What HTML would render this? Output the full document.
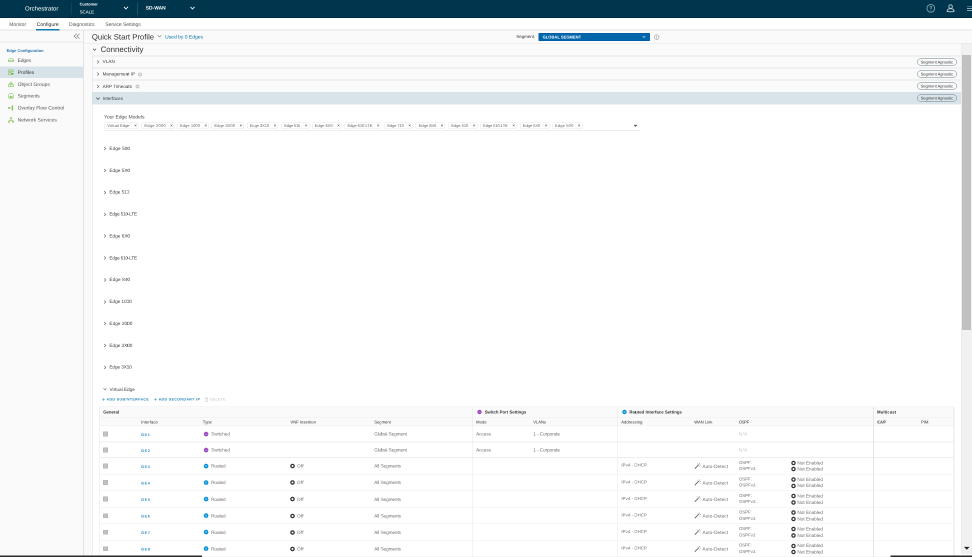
<!DOCTYPE html>
<html lang="en"><head><meta charset="utf-8"><title>Orchestrator</title>
<style>
html,body{margin:0;padding:0;background:#fff;}
body{width:972px;height:557px;overflow:hidden;font-family:"Liberation Sans",sans-serif;}
#clip{position:absolute;left:0;top:0;width:972px;height:557px;overflow:hidden;background:#fff;}
#root{position:absolute;left:0;top:0;width:1944px;height:1114px;transform:scale(0.5);transform-origin:0 0;will-change:transform;background:#fff;overflow:hidden;text-rendering:geometricPrecision;}
#root div,#root svg{position:absolute;}
.t{position:absolute;white-space:nowrap;font-family:"Liberation Sans",sans-serif;}
</style></head><body>
<div id="clip"><div id="root">
<div style="left:0.00px;top:0.00px;width:1944.00px;height:35.40px;background:#00364d;"></div>
<div style="left:0.00px;top:33.60px;width:1944.00px;height:2.00px;background:#002b40;"></div>
<div style="left:141.60px;top:5.20px;width:1.40px;height:24.20px;background:rgba(255,255,255,0.13);"></div>
<div style="left:274.20px;top:5.20px;width:1.40px;height:24.20px;background:rgba(255,255,255,0.13);"></div>
<svg style="left:246.40px;top:10.60px" width="12.00" height="10.00" viewBox="0 0 6 5"><path d="M1.0 1.4 L3 3.5 L5 1.4" fill="none" stroke="#fff" stroke-width="0.85"/></svg>
<svg style="left:378.60px;top:10.60px" width="12.00" height="10.00" viewBox="0 0 6 5"><path d="M1.0 1.4 L3 3.5 L5 1.4" fill="none" stroke="#fff" stroke-width="0.85"/></svg>
<svg style="left:1852.00px;top:7.00px" width="20.00" height="20.00" viewBox="0 0 10 10"><circle cx="4.8" cy="4.8" r="3.85" fill="none" stroke="#8ba5b3" stroke-width="0.85"/><path d="M3.8 4 Q3.9 2.9 4.9 2.9 Q5.9 3 5.8 3.9 Q5.7 4.5 4.85 4.9 L4.85 5.6" fill="none" stroke="#8ba5b3" stroke-width="0.7"/><circle cx="4.85" cy="6.6" r="0.45" fill="#8ba5b3"/></svg>
<svg style="left:1892.00px;top:6.00px" width="20.00" height="20.00" viewBox="0 0 10 10"><circle cx="4.6" cy="3.6" r="1.75" fill="none" stroke="#c5d2d9" stroke-width="0.85"/><path d="M1.1 8.3 Q1.3 5.7 4.6 5.7 Q7.9 5.7 8.1 8.3 Q4.6 9.3 1.1 8.3 Z" fill="none" stroke="#c5d2d9" stroke-width="0.85"/></svg>
<div style="left:1934.00px;top:11.60px;width:10.00px;height:1.80px;background:#8ba5b3;"></div>
<div style="left:1934.00px;top:15.80px;width:10.00px;height:1.80px;background:#8ba5b3;"></div>
<div style="left:1934.00px;top:20.40px;width:10.00px;height:1.80px;background:#8ba5b3;"></div>
<div style="left:0.00px;top:35.60px;width:1944.00px;height:24.40px;background:#fff;"></div>
<div style="left:0.00px;top:59.20px;width:1944.00px;height:1.60px;background:#e2e2e2;"></div>
<div style="left:71.60px;top:58.40px;width:47.80px;height:2.60px;background:#0f7bb0;"></div>
<div style="left:0.00px;top:60.80px;width:166.40px;height:1053.20px;background:#fafafa;"></div>
<div style="left:166.40px;top:60.80px;width:1.60px;height:1053.20px;background:#e3e3e3;"></div>
<div style="left:0.00px;top:83.40px;width:166.40px;height:1.40px;background:#e6e6e6;"></div>
<div style="left:0.00px;top:132.60px;width:166.80px;height:23.20px;background:#d8e3e9;"></div>
<svg style="left:143.00px;top:65.00px" width="20.00" height="16.00" viewBox="0 0 10 8"><path d="M5.2 1.2 L2.6 3.7 L5.2 6.2 M8 1.2 L5.4 3.7 L8 6.2" fill="none" stroke="#666" stroke-width="0.6"/></svg>
<svg style="left:14.60px;top:113.80px" width="14.00" height="14.00" viewBox="0 0 7 7"><path d="M0.9 4.6 L0.9 3.6 Q1.2 1.3 3.5 1.3 Q5.8 1.3 6.1 3.6 L6.1 4.6 Z M0.9 3.7 L6.1 3.7" fill="none" stroke="#6fb83a" stroke-width="0.5"/></svg>
<svg style="left:14.60px;top:138.20px" width="14.00" height="14.00" viewBox="0 0 7 7"><rect x="1.2" y="0.9" width="4.4" height="1.7" fill="none" stroke="#6fb83a" stroke-width="0.5"/><rect x="1.2" y="3.5" width="2.4" height="2.2" fill="none" stroke="#6fb83a" stroke-width="0.5"/><circle cx="5" cy="4.8" r="1.1" fill="#6fb83a"/></svg>
<svg style="left:14.60px;top:162.00px" width="14.00" height="14.00" viewBox="0 0 7 7"><path d="M3.5 0.8 L5 2.7 L2 2.7 Z" fill="none" stroke="#6fb83a" stroke-width="0.5"/><rect x="1" y="3.5" width="5" height="2.2" fill="none" stroke="#6fb83a" stroke-width="0.5"/><path d="M3.5 3.5 L3.5 5.7" stroke="#6fb83a" stroke-width="0.45"/></svg>
<svg style="left:14.60px;top:185.20px" width="14.00" height="14.00" viewBox="0 0 7 7"><path d="M1.3 5.7 L1.3 2.3 Q1.3 1.1 2.6 1.1 L4.4 1.1 Q5.7 1.1 5.7 2.3 L5.7 5.7 Z" fill="none" stroke="#6fb83a" stroke-width="0.5"/><path d="M2.1 5.2 L2.1 3.9 L3.2 3 L4.9 3.9 L4.9 5.2 Z" fill="#6fb83a" opacity="0.8"/></svg>
<svg style="left:14.60px;top:208.60px" width="14.00" height="14.00" viewBox="0 0 7 7"><path d="M1 3.4 L3.2 3.4 M3.2 3.4 L4.8 1.4 M3.2 3.4 L4.8 5.4" fill="none" stroke="#6fb83a" stroke-width="0.5"/><rect x="4.7" y="0.8" width="0.9" height="5.2" fill="#6fb83a"/><circle cx="1.5" cy="3.4" r="0.9" fill="#6fb83a"/></svg>
<svg style="left:14.60px;top:233.20px" width="14.00" height="14.00" viewBox="0 0 7 7"><circle cx="3.5" cy="1.7" r="1" fill="none" stroke="#6fb83a" stroke-width="0.5"/><path d="M3.5 2.8 L3.5 4 M1.5 5 L1.5 4 L5.5 4 L5.5 5" fill="none" stroke="#6fb83a" stroke-width="0.5"/><rect x="0.7" y="4.8" width="1.6" height="1.2" fill="#6fb83a"/><rect x="4.7" y="4.8" width="1.6" height="1.2" fill="#6fb83a"/></svg>
<div style="left:168.00px;top:60.80px;width:1776.00px;height:26.40px;background:#fafafa;"></div>
<div style="left:168.00px;top:87.20px;width:1754.40px;height:1026.80px;background:#fafafa;"></div>
<div style="left:168.00px;top:85.80px;width:1776.00px;height:1.40px;background:#e4e4e4;"></div>
<div style="left:1077.20px;top:65.80px;width:222.40px;height:16.20px;background:#0066ac;border:1.00px solid #0054a0;box-sizing:border-box;border-radius:1.20px;"></div>
<svg style="left:1282.00px;top:69.00px" width="12.00" height="10.00" viewBox="0 0 6 5"><path d="M1.6 1.6 L2.9 3 L4.2 1.6" fill="none" stroke="#cfe0f0" stroke-width="0.6"/></svg>
<svg style="left:1307.00px;top:68.00px" width="14.00" height="14.00" viewBox="0 0 7 7"><circle cx="3.2" cy="3.2" r="2.3" fill="none" stroke="#777" stroke-width="0.5"/><path d="M3.2 2.9 L3.2 4.4" stroke="#777" stroke-width="0.5"/><circle cx="3.2" cy="2.1" r="0.3" fill="#777"/></svg>
<svg style="left:313.00px;top:67.40px" width="12.00" height="10.00" viewBox="0 0 6 5"><path d="M1.1 1.7 L3 3.5 L4.9 1.7" fill="none" stroke="#777" stroke-width="0.55"/></svg>
<svg style="left:183.00px;top:93.60px" width="12.00" height="10.00" viewBox="0 0 6 5"><path d="M1.4 1.7 L3 3.4 L4.6 1.7" fill="none" stroke="#555" stroke-width="0.7"/></svg>
<div style="left:184.00px;top:111.20px;width:1738.40px;height:1002.80px;background:#fff;"></div>
<div style="left:184.00px;top:111.20px;width:1.20px;height:1002.80px;background:#dcdcdc;"></div>
<div style="left:185.20px;top:112.00px;width:1737.20px;height:24.00px;background:#fafafa;"></div>
<div style="left:185.20px;top:136.00px;width:1737.20px;height:24.00px;background:#fafafa;"></div>
<div style="left:185.20px;top:160.00px;width:1737.20px;height:24.40px;background:#fafafa;"></div>
<div style="left:184.00px;top:111.20px;width:1738.40px;height:1.40px;background:#e6e6e6;"></div>
<div style="left:184.00px;top:135.20px;width:1738.40px;height:1.40px;background:#e6e6e6;"></div>
<div style="left:184.00px;top:159.40px;width:1738.40px;height:1.40px;background:#e6e6e6;"></div>
<div style="left:184.00px;top:183.80px;width:1738.40px;height:1.40px;background:#e6e6e6;"></div>
<div style="left:185.20px;top:184.40px;width:1737.20px;height:24.60px;background:#d9e4ea;"></div>
<svg style="left:191.20px;top:119.20px" width="10.00" height="10.00" viewBox="0 0 5 5"><path d="M1.7 1 L3.3 2.5 L1.7 4" fill="none" stroke="#5a5a5a" stroke-width="0.55"/></svg>
<svg style="left:191.20px;top:143.40px" width="10.00" height="10.00" viewBox="0 0 5 5"><path d="M1.7 1 L3.3 2.5 L1.7 4" fill="none" stroke="#5a5a5a" stroke-width="0.55"/></svg>
<svg style="left:191.20px;top:167.80px" width="10.00" height="10.00" viewBox="0 0 5 5"><path d="M1.7 1 L3.3 2.5 L1.7 4" fill="none" stroke="#5a5a5a" stroke-width="0.55"/></svg>
<svg style="left:191.20px;top:192.00px" width="10.00" height="10.00" viewBox="0 0 5 5"><path d="M0.8 1.6 L2.5 3.4 L4.2 1.6" fill="none" stroke="#444" stroke-width="0.7"/></svg>
<svg style="left:275.20px;top:143.60px" width="10.00" height="10.00" viewBox="0 0 5 5"><circle cx="2.5" cy="2.5" r="1.6" fill="none" stroke="#888" stroke-width="0.45"/><path d="M2.5 2.3 L2.5 3.3" stroke="#888" stroke-width="0.45"/><circle cx="2.5" cy="1.7" r="0.25" fill="#888"/></svg>
<svg style="left:269.60px;top:167.80px" width="10.00" height="10.00" viewBox="0 0 5 5"><circle cx="2.5" cy="2.5" r="1.6" fill="none" stroke="#888" stroke-width="0.45"/><path d="M2.5 2.3 L2.5 3.3" stroke="#888" stroke-width="0.45"/><circle cx="2.5" cy="1.7" r="0.25" fill="#888"/></svg>
<div style="left:1834.20px;top:117.00px;width:80.00px;height:14.00px;background:#fafafa;border:1.10px solid #6a7f8c;box-sizing:border-box;border-radius:7.00px;"></div>
<div style="left:1834.20px;top:141.00px;width:80.00px;height:14.00px;background:#fafafa;border:1.10px solid #6a7f8c;box-sizing:border-box;border-radius:7.00px;"></div>
<div style="left:1834.20px;top:165.00px;width:80.00px;height:14.00px;background:#fafafa;border:1.10px solid #6a7f8c;box-sizing:border-box;border-radius:7.00px;"></div>
<div style="left:1834.20px;top:189.40px;width:80.00px;height:14.00px;background:#d9e4ea;border:1.10px solid #6a7f8c;box-sizing:border-box;border-radius:7.00px;"></div>
<div style="left:1922.40px;top:87.20px;width:21.60px;height:1020.40px;background:#f1f1f1;"></div>
<div style="left:1922.00px;top:87.20px;width:1.00px;height:1020.40px;background:#e6e6e6;"></div>
<div style="left:1923.80px;top:110.40px;width:18.20px;height:550.00px;background:#c1c1c1;"></div>
<svg style="left:1926.00px;top:1091.00px" width="16.00" height="12.00" viewBox="0 0 8 6"><path d="M1 1.4 L6.6 1.4 L3.8 4.2 Z" fill="#222"/></svg>
<div style="left:1922.40px;top:1107.60px;width:21.60px;height:6.40px;background:#fff;"></div>
<div style="left:208.40px;top:245.20px;width:69.00px;height:13.00px;background:#fff;border:1.00px solid #e4e4e4;box-sizing:border-box;border-radius:2.80px;"></div>
<div style="left:282.80px;top:245.20px;width:66.60px;height:13.00px;background:#fff;border:1.00px solid #e4e4e4;box-sizing:border-box;border-radius:2.80px;"></div>
<div style="left:354.00px;top:245.20px;width:64.00px;height:13.00px;background:#fff;border:1.00px solid #e4e4e4;box-sizing:border-box;border-radius:2.80px;"></div>
<div style="left:422.80px;top:245.20px;width:65.20px;height:13.00px;background:#fff;border:1.00px solid #e4e4e4;box-sizing:border-box;border-radius:2.80px;"></div>
<div style="left:493.60px;top:245.20px;width:62.80px;height:13.00px;background:#fff;border:1.00px solid #e4e4e4;box-sizing:border-box;border-radius:2.80px;"></div>
<div style="left:562.60px;top:245.20px;width:56.00px;height:13.00px;background:#fff;border:1.00px solid #e4e4e4;box-sizing:border-box;border-radius:2.80px;"></div>
<div style="left:623.60px;top:245.20px;width:59.80px;height:13.00px;background:#fff;border:1.00px solid #e4e4e4;box-sizing:border-box;border-radius:2.80px;"></div>
<div style="left:689.00px;top:245.20px;width:73.80px;height:13.00px;background:#fff;border:1.00px solid #e4e4e4;box-sizing:border-box;border-radius:2.80px;"></div>
<div style="left:768.80px;top:245.20px;width:57.00px;height:13.00px;background:#fff;border:1.00px solid #e4e4e4;box-sizing:border-box;border-radius:2.80px;"></div>
<div style="left:831.40px;top:245.20px;width:59.00px;height:13.00px;background:#fff;border:1.00px solid #e4e4e4;box-sizing:border-box;border-radius:2.80px;"></div>
<div style="left:896.40px;top:245.20px;width:58.20px;height:13.00px;background:#fff;border:1.00px solid #e4e4e4;box-sizing:border-box;border-radius:2.80px;"></div>
<div style="left:960.20px;top:245.20px;width:73.40px;height:13.00px;background:#fff;border:1.00px solid #e4e4e4;box-sizing:border-box;border-radius:2.80px;"></div>
<div style="left:1039.60px;top:245.20px;width:59.00px;height:13.00px;background:#fff;border:1.00px solid #e4e4e4;box-sizing:border-box;border-radius:2.80px;"></div>
<div style="left:1104.00px;top:245.20px;width:60.60px;height:13.00px;background:#fff;border:1.00px solid #e4e4e4;box-sizing:border-box;border-radius:2.80px;"></div>
<div style="left:208.00px;top:259.80px;width:1072.00px;height:1.20px;background:#dadada;"></div>
<svg style="left:1265.00px;top:247.00px" width="12.00" height="10.00" viewBox="0 0 6 5"><path d="M1.2 1.4 L4.8 1.4 L3 3.4 Z" fill="#444"/></svg>
<svg style="left:204.80px;top:292.40px" width="10.00" height="10.00" viewBox="0 0 5 5"><path d="M1.7 1 L3.3 2.5 L1.7 4" fill="none" stroke="#5a5a5a" stroke-width="0.55"/></svg>
<svg style="left:204.80px;top:336.14px" width="10.00" height="10.00" viewBox="0 0 5 5"><path d="M1.7 1 L3.3 2.5 L1.7 4" fill="none" stroke="#5a5a5a" stroke-width="0.55"/></svg>
<svg style="left:204.80px;top:379.88px" width="10.00" height="10.00" viewBox="0 0 5 5"><path d="M1.7 1 L3.3 2.5 L1.7 4" fill="none" stroke="#5a5a5a" stroke-width="0.55"/></svg>
<svg style="left:204.80px;top:423.62px" width="10.00" height="10.00" viewBox="0 0 5 5"><path d="M1.7 1 L3.3 2.5 L1.7 4" fill="none" stroke="#5a5a5a" stroke-width="0.55"/></svg>
<svg style="left:204.80px;top:467.36px" width="10.00" height="10.00" viewBox="0 0 5 5"><path d="M1.7 1 L3.3 2.5 L1.7 4" fill="none" stroke="#5a5a5a" stroke-width="0.55"/></svg>
<svg style="left:204.80px;top:511.10px" width="10.00" height="10.00" viewBox="0 0 5 5"><path d="M1.7 1 L3.3 2.5 L1.7 4" fill="none" stroke="#5a5a5a" stroke-width="0.55"/></svg>
<svg style="left:204.80px;top:554.84px" width="10.00" height="10.00" viewBox="0 0 5 5"><path d="M1.7 1 L3.3 2.5 L1.7 4" fill="none" stroke="#5a5a5a" stroke-width="0.55"/></svg>
<svg style="left:204.80px;top:598.58px" width="10.00" height="10.00" viewBox="0 0 5 5"><path d="M1.7 1 L3.3 2.5 L1.7 4" fill="none" stroke="#5a5a5a" stroke-width="0.55"/></svg>
<svg style="left:204.80px;top:642.32px" width="10.00" height="10.00" viewBox="0 0 5 5"><path d="M1.7 1 L3.3 2.5 L1.7 4" fill="none" stroke="#5a5a5a" stroke-width="0.55"/></svg>
<svg style="left:204.80px;top:686.06px" width="10.00" height="10.00" viewBox="0 0 5 5"><path d="M1.7 1 L3.3 2.5 L1.7 4" fill="none" stroke="#5a5a5a" stroke-width="0.55"/></svg>
<svg style="left:204.80px;top:729.80px" width="10.00" height="10.00" viewBox="0 0 5 5"><path d="M1.7 1 L3.3 2.5 L1.7 4" fill="none" stroke="#5a5a5a" stroke-width="0.55"/></svg>
<svg style="left:204.80px;top:772.80px" width="10.00" height="10.00" viewBox="0 0 5 5"><path d="M1 1.8 L2.5 3.3 L4 1.8" fill="none" stroke="#5a5a5a" stroke-width="0.55"/></svg>
<svg style="left:202.80px;top:794.60px" width="8.00" height="8.00" viewBox="0 0 4 4"><path d="M0.4 2 L3.6 2 M2 0.4 L2 3.6" stroke="#3a8fc0" stroke-width="0.45"/></svg>
<svg style="left:306.80px;top:794.60px" width="8.00" height="8.00" viewBox="0 0 4 4"><path d="M0.4 2 L3.6 2 M2 0.4 L2 3.6" stroke="#3a8fc0" stroke-width="0.45"/></svg>
<svg style="left:407.60px;top:793.20px" width="10.00" height="12.00" viewBox="0 0 5 6"><path d="M1 1.6 L4 1.6 M1.4 1.6 L1.4 5 L3.6 5 L3.6 1.6 M2 0.9 L3 0.9" fill="none" stroke="#c4c4c4" stroke-width="0.5"/></svg>
<div style="left:198.60px;top:813.80px;width:1709.40px;height:38.00px;background:#fafafa;"></div>
<div style="left:198.60px;top:813.20px;width:1709.40px;height:1.30px;background:#eeeeee;"></div>
<div style="left:198.60px;top:834.20px;width:1709.40px;height:1.30px;background:#eeeeee;"></div>
<div style="left:198.60px;top:851.20px;width:1709.40px;height:1.30px;background:#eeeeee;"></div>
<div style="left:198.60px;top:883.40px;width:1709.40px;height:1.30px;background:#eeeeee;"></div>
<div style="left:198.60px;top:914.40px;width:1709.40px;height:1.30px;background:#eeeeee;"></div>
<div style="left:198.60px;top:947.70px;width:1709.40px;height:1.30px;background:#eeeeee;"></div>
<div style="left:198.60px;top:980.80px;width:1709.40px;height:1.30px;background:#eeeeee;"></div>
<div style="left:198.60px;top:1013.90px;width:1709.40px;height:1.30px;background:#eeeeee;"></div>
<div style="left:198.60px;top:1047.00px;width:1709.40px;height:1.30px;background:#eeeeee;"></div>
<div style="left:198.60px;top:1080.10px;width:1709.40px;height:1.30px;background:#eeeeee;"></div>
<div style="left:198.60px;top:1113.20px;width:1709.40px;height:1.30px;background:#eeeeee;"></div>
<div style="left:198.00px;top:813.80px;width:1.30px;height:300.20px;background:#e6e6e6;"></div>
<div style="left:944.00px;top:813.80px;width:1.30px;height:300.20px;background:#e6e6e6;"></div>
<div style="left:1233.60px;top:813.80px;width:1.30px;height:300.20px;background:#e6e6e6;"></div>
<div style="left:1746.40px;top:813.80px;width:1.30px;height:300.20px;background:#e6e6e6;"></div>
<div style="left:1907.40px;top:813.80px;width:1.30px;height:300.20px;background:#e6e6e6;"></div>
<svg style="left:953.80px;top:819.00px" width="10.00" height="10.00" viewBox="0 0 5 5"><circle cx="2.5" cy="2.5" r="2.2" fill="#9a45c0"/><path d="M1.3 2.5 L3.7 2.5" stroke="#d9b5ea" stroke-width="0.5"/></svg>
<svg style="left:1244.00px;top:819.00px" width="10.00" height="10.00" viewBox="0 0 5 5"><circle cx="2.5" cy="2.5" r="2.2" fill="#0091da"/><path d="M1.7 1.7 L3.3 3.3 M3.3 1.7 L1.7 3.3" stroke="#bfe4f7" stroke-width="0.5"/></svg>
<div style="left:206.40px;top:863.20px;width:10.00px;height:9.80px;background:#c2c2c2;border:1.00px solid #adadad;box-sizing:border-box;border-radius:1.00px;"></div>
<svg style="left:406.92px;top:862.80px" width="10.40" height="10.40" viewBox="0 0 5.2 5.2"><circle cx="2.6" cy="2.6" r="2.3" fill="#9a48bf"/><path d="M1.3 2.6 L3.9 2.6" stroke="#d9b5ea" stroke-width="0.5"/></svg>
<div style="left:206.40px;top:895.20px;width:10.00px;height:9.80px;background:#c2c2c2;border:1.00px solid #adadad;box-sizing:border-box;border-radius:1.00px;"></div>
<svg style="left:406.92px;top:894.80px" width="10.40" height="10.40" viewBox="0 0 5.2 5.2"><circle cx="2.6" cy="2.6" r="2.3" fill="#9a48bf"/><path d="M1.3 2.6 L3.9 2.6" stroke="#d9b5ea" stroke-width="0.5"/></svg>
<div style="left:206.40px;top:927.20px;width:10.00px;height:9.80px;background:#c2c2c2;border:1.00px solid #adadad;box-sizing:border-box;border-radius:1.00px;"></div>
<svg style="left:406.92px;top:926.80px" width="10.40" height="10.40" viewBox="0 0 5.2 5.2"><circle cx="2.6" cy="2.6" r="2.3" fill="#0091da"/><path d="M1.7 1.7 L3.5 3.5 M3.5 1.7 L1.7 3.5" stroke="#bfe4f7" stroke-width="0.5"/></svg>
<svg style="left:580.34px;top:927.20px" width="10.00" height="10.00" viewBox="0 0 5 5"><circle cx="2.5" cy="2.5" r="1.65" fill="#fff" stroke="#333" stroke-width="1.3"/></svg>
<svg style="left:1388.00px;top:925.00px" width="14.00" height="14.00" viewBox="0 0 7 7"><path d="M0.8 6.2 L5 2" stroke="#555" stroke-width="0.8"/><path d="M5.6 0.6 L5.6 1.6 M6.6 2.6 L5.8 2.6 M3.2 1 L3.8 1.6 M6.2 4.6 L5.6 4" stroke="#555" stroke-width="0.5"/></svg>
<svg style="left:1581.80px;top:921.00px" width="10.00" height="10.00" viewBox="0 0 5 5"><circle cx="2.5" cy="2.5" r="1.6" fill="#fff" stroke="#333" stroke-width="1.25"/></svg>
<svg style="left:1581.80px;top:933.40px" width="10.00" height="10.00" viewBox="0 0 5 5"><circle cx="2.5" cy="2.5" r="1.6" fill="#fff" stroke="#333" stroke-width="1.25"/></svg>
<div style="left:206.40px;top:960.30px;width:10.00px;height:9.80px;background:#c2c2c2;border:1.00px solid #adadad;box-sizing:border-box;border-radius:1.00px;"></div>
<svg style="left:406.92px;top:959.90px" width="10.40" height="10.40" viewBox="0 0 5.2 5.2"><circle cx="2.6" cy="2.6" r="2.3" fill="#0091da"/><path d="M1.7 1.7 L3.5 3.5 M3.5 1.7 L1.7 3.5" stroke="#bfe4f7" stroke-width="0.5"/></svg>
<svg style="left:580.34px;top:960.30px" width="10.00" height="10.00" viewBox="0 0 5 5"><circle cx="2.5" cy="2.5" r="1.65" fill="#fff" stroke="#333" stroke-width="1.3"/></svg>
<svg style="left:1388.00px;top:958.10px" width="14.00" height="14.00" viewBox="0 0 7 7"><path d="M0.8 6.2 L5 2" stroke="#555" stroke-width="0.8"/><path d="M5.6 0.6 L5.6 1.6 M6.6 2.6 L5.8 2.6 M3.2 1 L3.8 1.6 M6.2 4.6 L5.6 4" stroke="#555" stroke-width="0.5"/></svg>
<svg style="left:1581.80px;top:954.10px" width="10.00" height="10.00" viewBox="0 0 5 5"><circle cx="2.5" cy="2.5" r="1.6" fill="#fff" stroke="#333" stroke-width="1.25"/></svg>
<svg style="left:1581.80px;top:966.50px" width="10.00" height="10.00" viewBox="0 0 5 5"><circle cx="2.5" cy="2.5" r="1.6" fill="#fff" stroke="#333" stroke-width="1.25"/></svg>
<div style="left:206.40px;top:993.40px;width:10.00px;height:9.80px;background:#c2c2c2;border:1.00px solid #adadad;box-sizing:border-box;border-radius:1.00px;"></div>
<svg style="left:406.92px;top:993.00px" width="10.40" height="10.40" viewBox="0 0 5.2 5.2"><circle cx="2.6" cy="2.6" r="2.3" fill="#0091da"/><path d="M1.7 1.7 L3.5 3.5 M3.5 1.7 L1.7 3.5" stroke="#bfe4f7" stroke-width="0.5"/></svg>
<svg style="left:580.34px;top:993.40px" width="10.00" height="10.00" viewBox="0 0 5 5"><circle cx="2.5" cy="2.5" r="1.65" fill="#fff" stroke="#333" stroke-width="1.3"/></svg>
<svg style="left:1388.00px;top:991.20px" width="14.00" height="14.00" viewBox="0 0 7 7"><path d="M0.8 6.2 L5 2" stroke="#555" stroke-width="0.8"/><path d="M5.6 0.6 L5.6 1.6 M6.6 2.6 L5.8 2.6 M3.2 1 L3.8 1.6 M6.2 4.6 L5.6 4" stroke="#555" stroke-width="0.5"/></svg>
<svg style="left:1581.80px;top:987.20px" width="10.00" height="10.00" viewBox="0 0 5 5"><circle cx="2.5" cy="2.5" r="1.6" fill="#fff" stroke="#333" stroke-width="1.25"/></svg>
<svg style="left:1581.80px;top:999.60px" width="10.00" height="10.00" viewBox="0 0 5 5"><circle cx="2.5" cy="2.5" r="1.6" fill="#fff" stroke="#333" stroke-width="1.25"/></svg>
<div style="left:206.40px;top:1026.50px;width:10.00px;height:9.80px;background:#c2c2c2;border:1.00px solid #adadad;box-sizing:border-box;border-radius:1.00px;"></div>
<svg style="left:406.92px;top:1026.10px" width="10.40" height="10.40" viewBox="0 0 5.2 5.2"><circle cx="2.6" cy="2.6" r="2.3" fill="#0091da"/><path d="M1.7 1.7 L3.5 3.5 M3.5 1.7 L1.7 3.5" stroke="#bfe4f7" stroke-width="0.5"/></svg>
<svg style="left:580.34px;top:1026.50px" width="10.00" height="10.00" viewBox="0 0 5 5"><circle cx="2.5" cy="2.5" r="1.65" fill="#fff" stroke="#333" stroke-width="1.3"/></svg>
<svg style="left:1388.00px;top:1024.30px" width="14.00" height="14.00" viewBox="0 0 7 7"><path d="M0.8 6.2 L5 2" stroke="#555" stroke-width="0.8"/><path d="M5.6 0.6 L5.6 1.6 M6.6 2.6 L5.8 2.6 M3.2 1 L3.8 1.6 M6.2 4.6 L5.6 4" stroke="#555" stroke-width="0.5"/></svg>
<svg style="left:1581.80px;top:1020.30px" width="10.00" height="10.00" viewBox="0 0 5 5"><circle cx="2.5" cy="2.5" r="1.6" fill="#fff" stroke="#333" stroke-width="1.25"/></svg>
<svg style="left:1581.80px;top:1032.70px" width="10.00" height="10.00" viewBox="0 0 5 5"><circle cx="2.5" cy="2.5" r="1.6" fill="#fff" stroke="#333" stroke-width="1.25"/></svg>
<div style="left:206.40px;top:1059.60px;width:10.00px;height:9.80px;background:#c2c2c2;border:1.00px solid #adadad;box-sizing:border-box;border-radius:1.00px;"></div>
<svg style="left:406.92px;top:1059.20px" width="10.40" height="10.40" viewBox="0 0 5.2 5.2"><circle cx="2.6" cy="2.6" r="2.3" fill="#0091da"/><path d="M1.7 1.7 L3.5 3.5 M3.5 1.7 L1.7 3.5" stroke="#bfe4f7" stroke-width="0.5"/></svg>
<svg style="left:580.34px;top:1059.60px" width="10.00" height="10.00" viewBox="0 0 5 5"><circle cx="2.5" cy="2.5" r="1.65" fill="#fff" stroke="#333" stroke-width="1.3"/></svg>
<svg style="left:1388.00px;top:1057.40px" width="14.00" height="14.00" viewBox="0 0 7 7"><path d="M0.8 6.2 L5 2" stroke="#555" stroke-width="0.8"/><path d="M5.6 0.6 L5.6 1.6 M6.6 2.6 L5.8 2.6 M3.2 1 L3.8 1.6 M6.2 4.6 L5.6 4" stroke="#555" stroke-width="0.5"/></svg>
<svg style="left:1581.80px;top:1053.40px" width="10.00" height="10.00" viewBox="0 0 5 5"><circle cx="2.5" cy="2.5" r="1.6" fill="#fff" stroke="#333" stroke-width="1.25"/></svg>
<svg style="left:1581.80px;top:1065.80px" width="10.00" height="10.00" viewBox="0 0 5 5"><circle cx="2.5" cy="2.5" r="1.6" fill="#fff" stroke="#333" stroke-width="1.25"/></svg>
<div style="left:206.40px;top:1092.70px;width:10.00px;height:9.80px;background:#c2c2c2;border:1.00px solid #adadad;box-sizing:border-box;border-radius:1.00px;"></div>
<svg style="left:406.92px;top:1092.30px" width="10.40" height="10.40" viewBox="0 0 5.2 5.2"><circle cx="2.6" cy="2.6" r="2.3" fill="#0091da"/><path d="M1.7 1.7 L3.5 3.5 M3.5 1.7 L1.7 3.5" stroke="#bfe4f7" stroke-width="0.5"/></svg>
<svg style="left:580.34px;top:1092.70px" width="10.00" height="10.00" viewBox="0 0 5 5"><circle cx="2.5" cy="2.5" r="1.65" fill="#fff" stroke="#333" stroke-width="1.3"/></svg>
<svg style="left:1388.00px;top:1090.50px" width="14.00" height="14.00" viewBox="0 0 7 7"><path d="M0.8 6.2 L5 2" stroke="#555" stroke-width="0.8"/><path d="M5.6 0.6 L5.6 1.6 M6.6 2.6 L5.8 2.6 M3.2 1 L3.8 1.6 M6.2 4.6 L5.6 4" stroke="#555" stroke-width="0.5"/></svg>
<svg style="left:1581.80px;top:1086.50px" width="10.00" height="10.00" viewBox="0 0 5 5"><circle cx="2.5" cy="2.5" r="1.6" fill="#fff" stroke="#333" stroke-width="1.25"/></svg>
<svg style="left:1581.80px;top:1098.90px" width="10.00" height="10.00" viewBox="0 0 5 5"><circle cx="2.5" cy="2.5" r="1.6" fill="#fff" stroke="#333" stroke-width="1.25"/></svg>
<div style="left:0.00px;top:1111.40px;width:404.40px;height:2.60px;background:#2b2b2b;"></div>
<div style="left:1780.80px;top:1111.40px;width:163.20px;height:2.60px;background:#2b2b2b;"></div>
<span class="t" style="left:50.00px;top:10px;font-size:12.00px;line-height:14px;color:#fff;">Orchestrator</span>
<span class="t" style="left:159.20px;top:4px;font-size:7.80px;line-height:9px;color:#fff;font-weight:700;">Customer</span>
<span class="t" style="left:159.20px;top:19px;font-size:8.84px;line-height:10px;color:#fff;letter-spacing:0.01px;">SCALE</span>
<span class="t" style="left:291.40px;top:11px;font-size:9.86px;line-height:11px;color:#fff;font-weight:700;letter-spacing:0.02px;">SD-WAN</span>
<span class="t" style="left:18.40px;top:44px;font-size:10.04px;line-height:11px;color:#565656;letter-spacing:0.09px;">Monitor</span>
<span class="t" style="left:73.40px;top:44px;font-size:10.04px;line-height:11px;color:#222;letter-spacing:0.06px;">Configure</span>
<span class="t" style="left:138.00px;top:44px;font-size:10.04px;line-height:11px;color:#565656;letter-spacing:-0.05px;">Diagnostics</span>
<span class="t" style="left:210.60px;top:44px;font-size:10.04px;line-height:11px;color:#565656;letter-spacing:-0.10px;">Service Settings</span>
<span class="t" style="left:13.20px;top:97px;font-size:7.98px;line-height:9px;color:#2a76ab;font-weight:700;">Edge Configuration</span>
<span class="t" style="left:35.20px;top:116px;font-size:9.98px;line-height:11px;color:#565656;letter-spacing:-0.32px;">Edges</span>
<span class="t" style="left:35.20px;top:140px;font-size:9.98px;line-height:11px;color:#333;">Profiles</span>
<span class="t" style="left:35.20px;top:164px;font-size:9.98px;line-height:11px;color:#565656;letter-spacing:0.03px;">Object Groups</span>
<span class="t" style="left:35.20px;top:187px;font-size:9.98px;line-height:11px;color:#565656;letter-spacing:-0.07px;">Segments</span>
<span class="t" style="left:35.20px;top:211px;font-size:9.98px;line-height:11px;color:#565656;letter-spacing:0.02px;">Overlay Flow Control</span>
<span class="t" style="left:35.20px;top:235px;font-size:9.98px;line-height:11px;color:#565656;letter-spacing:0.07px;">Network Services</span>
<span class="t" style="left:183.80px;top:66px;font-size:15.44px;line-height:17px;color:#333;">Quick Start Profile</span>
<span class="t" style="left:330.20px;top:69px;font-size:9.98px;line-height:11px;color:#0072a3;">Used by 0 Edges</span>
<span class="t" style="left:1032.80px;top:68px;font-size:8.74px;line-height:10px;color:#333;">Segment:</span>
<span class="t" style="left:1085.20px;top:70px;font-size:8.16px;line-height:9px;color:#fff;font-weight:700;letter-spacing:0.01px;">GLOBAL SEGMENT</span>
<span class="t" style="left:201.20px;top:91px;font-size:15.72px;line-height:17px;color:#333;">Connectivity</span>
<span class="t" style="left:205.20px;top:118px;font-size:9.28px;line-height:10px;color:#444;letter-spacing:0.13px;">VLAN</span>
<span class="t" style="left:205.20px;top:143px;font-size:9.28px;line-height:10px;color:#444;letter-spacing:-0.04px;">Management IP</span>
<span class="t" style="left:205.20px;top:168px;font-size:9.28px;line-height:10px;color:#444;letter-spacing:-0.02px;">ARP Timeouts</span>
<span class="t" style="left:205.20px;top:192px;font-size:9.28px;line-height:10px;color:#444;letter-spacing:0.03px;">Interfaces</span>
<span class="t" style="left:1841.40px;top:120px;font-size:8.02px;line-height:9px;color:#333;">Segment Agnostic</span>
<span class="t" style="left:1841.40px;top:144px;font-size:8.02px;line-height:9px;color:#333;">Segment Agnostic</span>
<span class="t" style="left:1841.40px;top:168px;font-size:8.02px;line-height:9px;color:#333;">Segment Agnostic</span>
<span class="t" style="left:1841.40px;top:192px;font-size:8.02px;line-height:9px;color:#333;">Segment Agnostic</span>
<span class="t" style="left:208.00px;top:229px;font-size:9.96px;line-height:11px;color:#484848;">Your Edge Models</span>
<span class="t" style="left:218.80px;top:292px;font-size:9.34px;line-height:10px;color:#444;letter-spacing:0.21px;">Edge 500</span>
<span class="t" style="left:218.80px;top:336px;font-size:9.34px;line-height:10px;color:#444;letter-spacing:0.06px;">Edge 5X0</span>
<span class="t" style="left:218.80px;top:379px;font-size:9.34px;line-height:10px;color:#444;">Edge 510</span>
<span class="t" style="left:218.80px;top:423px;font-size:9.34px;line-height:10px;color:#444;letter-spacing:-0.37px;">Edge 510-LTE</span>
<span class="t" style="left:218.80px;top:467px;font-size:9.34px;line-height:10px;color:#444;letter-spacing:0.06px;">Edge 6X0</span>
<span class="t" style="left:218.80px;top:511px;font-size:9.34px;line-height:10px;color:#444;letter-spacing:-0.37px;">Edge 610-LTE</span>
<span class="t" style="left:218.80px;top:554px;font-size:9.34px;line-height:10px;color:#444;letter-spacing:0.21px;">Edge 840</span>
<span class="t" style="left:218.80px;top:598px;font-size:9.34px;line-height:10px;color:#444;letter-spacing:-0.02px;">Edge 1000</span>
<span class="t" style="left:218.80px;top:642px;font-size:9.34px;line-height:10px;color:#444;letter-spacing:0.11px;">Edge 2000</span>
<span class="t" style="left:218.80px;top:686px;font-size:9.34px;line-height:10px;color:#444;letter-spacing:-0.02px;">Edge 3X00</span>
<span class="t" style="left:218.80px;top:729px;font-size:9.34px;line-height:10px;color:#444;letter-spacing:-0.15px;">Edge 3X10</span>
<span class="t" style="left:219.00px;top:774px;font-size:9.34px;line-height:10px;color:#444;">Virtual Edge</span>
<span class="t" style="left:213.00px;top:795px;font-size:7.10px;line-height:8px;color:#1f80b6;font-weight:700;letter-spacing:0.80px;">ADD SUBINTERFACE</span>
<span class="t" style="left:317.20px;top:795px;font-size:7.10px;line-height:8px;color:#1f80b6;font-weight:700;letter-spacing:0.78px;">ADD SECONDARY IP</span>
<span class="t" style="left:420.40px;top:795px;font-size:7.10px;line-height:8px;color:#cdcdcd;font-weight:700;letter-spacing:0.48px;">DELETE</span>
<span class="t" style="left:206.40px;top:819px;font-size:8.60px;line-height:10px;color:#333;font-weight:700;letter-spacing:-0.07px;">General</span>
<span class="t" style="left:969.40px;top:819px;font-size:8.60px;line-height:10px;color:#333;font-weight:700;letter-spacing:-0.02px;">Switch Port Settings</span>
<span class="t" style="left:1258.80px;top:819px;font-size:8.60px;line-height:10px;color:#333;font-weight:700;letter-spacing:0.04px;">Routed Interface Settings</span>
<span class="t" style="left:1754.00px;top:819px;font-size:8.60px;line-height:10px;color:#333;font-weight:700;letter-spacing:0.12px;">Multicast</span>
<span class="t" style="left:282.20px;top:840px;font-size:8.24px;line-height:9px;color:#333;letter-spacing:0.17px;">Interface</span>
<span class="t" style="left:405.60px;top:840px;font-size:8.24px;line-height:9px;color:#333;letter-spacing:0.05px;">Type</span>
<span class="t" style="left:580.80px;top:840px;font-size:8.24px;line-height:9px;color:#333;letter-spacing:0.05px;">VNF Insertion</span>
<span class="t" style="left:748.60px;top:840px;font-size:8.24px;line-height:9px;color:#333;">Segment</span>
<span class="t" style="left:952.20px;top:840px;font-size:8.24px;line-height:9px;color:#333;letter-spacing:0.20px;">Mode</span>
<span class="t" style="left:1066.60px;top:840px;font-size:8.24px;line-height:9px;color:#333;letter-spacing:-0.06px;">VLANs</span>
<span class="t" style="left:1242.40px;top:840px;font-size:8.24px;line-height:9px;color:#333;letter-spacing:0.13px;">Addressing</span>
<span class="t" style="left:1388.60px;top:840px;font-size:8.24px;line-height:9px;color:#333;letter-spacing:-0.02px;">WAN Link</span>
<span class="t" style="left:1477.80px;top:840px;font-size:8.24px;line-height:9px;color:#333;letter-spacing:-0.67px;">OSPF</span>
<span class="t" style="left:1754.00px;top:840px;font-size:8.24px;line-height:9px;color:#333;letter-spacing:-0.75px;">IGMP</span>
<span class="t" style="left:1842.20px;top:840px;font-size:8.24px;line-height:9px;color:#333;letter-spacing:-0.02px;">PIM</span>
<span class="t" style="left:282.20px;top:865px;font-size:7.40px;line-height:9px;color:#2488c2;font-weight:700;letter-spacing:1.30px;">GE1</span>
<span class="t" style="left:422.20px;top:863px;font-size:9.32px;line-height:10px;color:#707070;">Switched</span>
<span class="t" style="left:748.60px;top:863px;font-size:9.32px;line-height:10px;color:#707070;letter-spacing:-0.14px;">Global Segment</span>
<span class="t" style="left:952.20px;top:863px;font-size:9.32px;line-height:10px;color:#707070;letter-spacing:-0.04px;">Access</span>
<span class="t" style="left:1066.60px;top:863px;font-size:9.32px;line-height:10px;color:#707070;letter-spacing:-0.12px;">1 - Corporate</span>
<span class="t" style="left:1477.80px;top:863px;font-size:9.32px;line-height:10px;color:#cacaca;letter-spacing:0.43px;">N/A</span>
<span class="t" style="left:282.20px;top:897px;font-size:7.40px;line-height:9px;color:#2488c2;font-weight:700;letter-spacing:1.30px;">GE2</span>
<span class="t" style="left:422.20px;top:895px;font-size:9.32px;line-height:10px;color:#707070;">Switched</span>
<span class="t" style="left:748.60px;top:895px;font-size:9.32px;line-height:10px;color:#707070;letter-spacing:-0.14px;">Global Segment</span>
<span class="t" style="left:952.20px;top:895px;font-size:9.32px;line-height:10px;color:#707070;letter-spacing:-0.04px;">Access</span>
<span class="t" style="left:1066.60px;top:895px;font-size:9.32px;line-height:10px;color:#707070;letter-spacing:-0.12px;">1 - Corporate</span>
<span class="t" style="left:1477.80px;top:895px;font-size:9.32px;line-height:10px;color:#cacaca;letter-spacing:0.43px;">N/A</span>
<span class="t" style="left:282.20px;top:929px;font-size:7.40px;line-height:9px;color:#2488c2;font-weight:700;letter-spacing:1.30px;">GE3</span>
<span class="t" style="left:422.20px;top:927px;font-size:9.32px;line-height:10px;color:#707070;letter-spacing:-0.21px;">Routed</span>
<span class="t" style="left:594.00px;top:927px;font-size:9.32px;line-height:10px;color:#707070;letter-spacing:0.47px;">Off</span>
<span class="t" style="left:748.60px;top:927px;font-size:9.32px;line-height:10px;color:#707070;letter-spacing:-0.13px;">All Segments</span>
<span class="t" style="left:1242.80px;top:925px;font-size:8.64px;line-height:10px;color:#727272;letter-spacing:0.16px;">IPv4 - DHCP</span>
<span class="t" style="left:1405.00px;top:928px;font-size:9.32px;line-height:10px;color:#707070;letter-spacing:0.18px;">Auto-Detect</span>
<span class="t" style="left:1478.00px;top:920px;font-size:8.64px;line-height:10px;color:#727272;letter-spacing:-0.12px;">OSPF:</span>
<span class="t" style="left:1478.00px;top:932px;font-size:8.64px;line-height:10px;color:#727272;">OSPFv3:</span>
<span class="t" style="left:1594.80px;top:921px;font-size:9.32px;line-height:10px;color:#707070;">Not Enabled</span>
<span class="t" style="left:1594.80px;top:933px;font-size:9.32px;line-height:10px;color:#707070;">Not Enabled</span>
<span class="t" style="left:282.20px;top:962px;font-size:7.40px;line-height:9px;color:#2488c2;font-weight:700;letter-spacing:1.30px;">GE4</span>
<span class="t" style="left:422.20px;top:960px;font-size:9.32px;line-height:10px;color:#707070;letter-spacing:-0.21px;">Routed</span>
<span class="t" style="left:594.00px;top:960px;font-size:9.32px;line-height:10px;color:#707070;letter-spacing:0.47px;">Off</span>
<span class="t" style="left:748.60px;top:960px;font-size:9.32px;line-height:10px;color:#707070;letter-spacing:-0.13px;">All Segments</span>
<span class="t" style="left:1242.80px;top:959px;font-size:8.64px;line-height:10px;color:#727272;letter-spacing:0.16px;">IPv4 - DHCP</span>
<span class="t" style="left:1405.00px;top:961px;font-size:9.32px;line-height:10px;color:#707070;letter-spacing:0.18px;">Auto-Detect</span>
<span class="t" style="left:1478.00px;top:953px;font-size:8.64px;line-height:10px;color:#727272;letter-spacing:-0.12px;">OSPF:</span>
<span class="t" style="left:1478.00px;top:965px;font-size:8.64px;line-height:10px;color:#727272;">OSPFv3:</span>
<span class="t" style="left:1594.80px;top:954px;font-size:9.32px;line-height:10px;color:#707070;">Not Enabled</span>
<span class="t" style="left:1594.80px;top:966px;font-size:9.32px;line-height:10px;color:#707070;">Not Enabled</span>
<span class="t" style="left:282.20px;top:995px;font-size:7.40px;line-height:9px;color:#2488c2;font-weight:700;letter-spacing:1.30px;">GE5</span>
<span class="t" style="left:422.20px;top:994px;font-size:9.32px;line-height:10px;color:#707070;letter-spacing:-0.21px;">Routed</span>
<span class="t" style="left:594.00px;top:994px;font-size:9.32px;line-height:10px;color:#707070;letter-spacing:0.47px;">Off</span>
<span class="t" style="left:748.60px;top:994px;font-size:9.32px;line-height:10px;color:#707070;letter-spacing:-0.13px;">All Segments</span>
<span class="t" style="left:1242.80px;top:992px;font-size:8.64px;line-height:10px;color:#727272;letter-spacing:0.16px;">IPv4 - DHCP</span>
<span class="t" style="left:1405.00px;top:994px;font-size:9.32px;line-height:10px;color:#707070;letter-spacing:0.18px;">Auto-Detect</span>
<span class="t" style="left:1478.00px;top:986px;font-size:8.64px;line-height:10px;color:#727272;letter-spacing:-0.12px;">OSPF:</span>
<span class="t" style="left:1478.00px;top:998px;font-size:8.64px;line-height:10px;color:#727272;">OSPFv3:</span>
<span class="t" style="left:1594.80px;top:987px;font-size:9.32px;line-height:10px;color:#707070;">Not Enabled</span>
<span class="t" style="left:1594.80px;top:1000px;font-size:9.32px;line-height:10px;color:#707070;">Not Enabled</span>
<span class="t" style="left:282.20px;top:1028px;font-size:7.40px;line-height:9px;color:#2488c2;font-weight:700;letter-spacing:1.30px;">GE6</span>
<span class="t" style="left:422.20px;top:1027px;font-size:9.32px;line-height:10px;color:#707070;letter-spacing:-0.21px;">Routed</span>
<span class="t" style="left:594.00px;top:1027px;font-size:9.32px;line-height:10px;color:#707070;letter-spacing:0.47px;">Off</span>
<span class="t" style="left:748.60px;top:1027px;font-size:9.32px;line-height:10px;color:#707070;letter-spacing:-0.13px;">All Segments</span>
<span class="t" style="left:1242.80px;top:1025px;font-size:8.64px;line-height:10px;color:#727272;letter-spacing:0.16px;">IPv4 - DHCP</span>
<span class="t" style="left:1405.00px;top:1027px;font-size:9.32px;line-height:10px;color:#707070;letter-spacing:0.18px;">Auto-Detect</span>
<span class="t" style="left:1478.00px;top:1019px;font-size:8.64px;line-height:10px;color:#727272;letter-spacing:-0.12px;">OSPF:</span>
<span class="t" style="left:1478.00px;top:1032px;font-size:8.64px;line-height:10px;color:#727272;">OSPFv3:</span>
<span class="t" style="left:1594.80px;top:1020px;font-size:9.32px;line-height:10px;color:#707070;">Not Enabled</span>
<span class="t" style="left:1594.80px;top:1033px;font-size:9.32px;line-height:10px;color:#707070;">Not Enabled</span>
<span class="t" style="left:282.20px;top:1061px;font-size:7.40px;line-height:9px;color:#2488c2;font-weight:700;letter-spacing:1.30px;">GE7</span>
<span class="t" style="left:422.20px;top:1060px;font-size:9.32px;line-height:10px;color:#707070;letter-spacing:-0.21px;">Routed</span>
<span class="t" style="left:594.00px;top:1060px;font-size:9.32px;line-height:10px;color:#707070;letter-spacing:0.47px;">Off</span>
<span class="t" style="left:748.60px;top:1060px;font-size:9.32px;line-height:10px;color:#707070;letter-spacing:-0.13px;">All Segments</span>
<span class="t" style="left:1242.80px;top:1058px;font-size:8.64px;line-height:10px;color:#727272;letter-spacing:0.16px;">IPv4 - DHCP</span>
<span class="t" style="left:1405.00px;top:1060px;font-size:9.32px;line-height:10px;color:#707070;letter-spacing:0.18px;">Auto-Detect</span>
<span class="t" style="left:1478.00px;top:1052px;font-size:8.64px;line-height:10px;color:#727272;letter-spacing:-0.12px;">OSPF:</span>
<span class="t" style="left:1478.00px;top:1065px;font-size:8.64px;line-height:10px;color:#727272;">OSPFv3:</span>
<span class="t" style="left:1594.80px;top:1053px;font-size:9.32px;line-height:10px;color:#707070;">Not Enabled</span>
<span class="t" style="left:1594.80px;top:1066px;font-size:9.32px;line-height:10px;color:#707070;">Not Enabled</span>
<span class="t" style="left:282.20px;top:1094px;font-size:7.40px;line-height:9px;color:#2488c2;font-weight:700;letter-spacing:1.30px;">GE8</span>
<span class="t" style="left:422.20px;top:1093px;font-size:9.32px;line-height:10px;color:#707070;letter-spacing:-0.21px;">Routed</span>
<span class="t" style="left:594.00px;top:1093px;font-size:9.32px;line-height:10px;color:#707070;letter-spacing:0.47px;">Off</span>
<span class="t" style="left:748.60px;top:1093px;font-size:9.32px;line-height:10px;color:#707070;letter-spacing:-0.13px;">All Segments</span>
<span class="t" style="left:1242.80px;top:1091px;font-size:8.64px;line-height:10px;color:#727272;letter-spacing:0.16px;">IPv4 - DHCP</span>
<span class="t" style="left:1405.00px;top:1093px;font-size:9.32px;line-height:10px;color:#707070;letter-spacing:0.18px;">Auto-Detect</span>
<span class="t" style="left:1478.00px;top:1085px;font-size:8.64px;line-height:10px;color:#727272;letter-spacing:-0.12px;">OSPF:</span>
<span class="t" style="left:1478.00px;top:1098px;font-size:8.64px;line-height:10px;color:#727272;">OSPFv3:</span>
<span class="t" style="left:1594.80px;top:1086px;font-size:9.32px;line-height:10px;color:#707070;">Not Enabled</span>
<span class="t" style="left:1594.80px;top:1099px;font-size:9.32px;line-height:10px;color:#707070;">Not Enabled</span>
<span class="t" style="left:214.40px;top:247px;font-size:8.08px;line-height:9px;color:#666;letter-spacing:0.10px;">Virtual Edge</span>
<span class="t" style="left:268.20px;top:246px;font-size:9.60px;line-height:11px;color:#3c3c3c;">×</span>
<span class="t" style="left:288.80px;top:247px;font-size:8.08px;line-height:9px;color:#666;letter-spacing:0.44px;">Edge 2000</span>
<span class="t" style="left:340.20px;top:246px;font-size:9.60px;line-height:11px;color:#3c3c3c;">×</span>
<span class="t" style="left:360.00px;top:247px;font-size:8.08px;line-height:9px;color:#666;letter-spacing:0.11px;">Edge 1000</span>
<span class="t" style="left:408.80px;top:246px;font-size:9.60px;line-height:11px;color:#3c3c3c;">×</span>
<span class="t" style="left:428.80px;top:247px;font-size:8.08px;line-height:9px;color:#666;letter-spacing:0.15px;">Edge 3X00</span>
<span class="t" style="left:478.80px;top:246px;font-size:9.60px;line-height:11px;color:#3c3c3c;">×</span>
<span class="t" style="left:499.60px;top:247px;font-size:8.08px;line-height:9px;color:#666;letter-spacing:-0.15px;">Edge 3X10</span>
<span class="t" style="left:547.20px;top:246px;font-size:9.60px;line-height:11px;color:#3c3c3c;">×</span>
<span class="t" style="left:568.60px;top:247px;font-size:8.08px;line-height:9px;color:#666;letter-spacing:-0.37px;">Edge 515</span>
<span class="t" style="left:609.40px;top:246px;font-size:9.60px;line-height:11px;color:#3c3c3c;">×</span>
<span class="t" style="left:629.60px;top:247px;font-size:8.08px;line-height:9px;color:#666;letter-spacing:0.05px;">Edge 6X0</span>
<span class="t" style="left:674.20px;top:246px;font-size:9.60px;line-height:11px;color:#3c3c3c;">×</span>
<span class="t" style="left:695.00px;top:247px;font-size:8.08px;line-height:9px;color:#666;letter-spacing:-0.15px;">Edge 610-LTE</span>
<span class="t" style="left:753.60px;top:246px;font-size:9.60px;line-height:11px;color:#3c3c3c;">×</span>
<span class="t" style="left:774.80px;top:247px;font-size:8.08px;line-height:9px;color:#666;letter-spacing:-0.23px;">Edge 710</span>
<span class="t" style="left:816.60px;top:246px;font-size:9.60px;line-height:11px;color:#3c3c3c;">×</span>
<span class="t" style="left:837.40px;top:247px;font-size:8.08px;line-height:9px;color:#666;letter-spacing:0.06px;">Edge 840</span>
<span class="t" style="left:881.20px;top:246px;font-size:9.60px;line-height:11px;color:#3c3c3c;">×</span>
<span class="t" style="left:902.40px;top:247px;font-size:8.08px;line-height:9px;color:#666;letter-spacing:-0.06px;">Edge 510</span>
<span class="t" style="left:945.40px;top:246px;font-size:9.60px;line-height:11px;color:#3c3c3c;">×</span>
<span class="t" style="left:966.20px;top:247px;font-size:8.08px;line-height:9px;color:#666;letter-spacing:-0.19px;">Edge 510-LTE</span>
<span class="t" style="left:1024.40px;top:246px;font-size:9.60px;line-height:11px;color:#3c3c3c;">×</span>
<span class="t" style="left:1045.60px;top:247px;font-size:8.08px;line-height:9px;color:#666;letter-spacing:-0.07px;">Edge 5X0</span>
<span class="t" style="left:1089.40px;top:246px;font-size:9.60px;line-height:11px;color:#3c3c3c;">×</span>
<span class="t" style="left:1110.00px;top:247px;font-size:8.08px;line-height:9px;color:#666;letter-spacing:0.29px;">Edge 500</span>
<span class="t" style="left:1155.40px;top:246px;font-size:9.60px;line-height:11px;color:#3c3c3c;">×</span>
</div></div>
</body></html>
